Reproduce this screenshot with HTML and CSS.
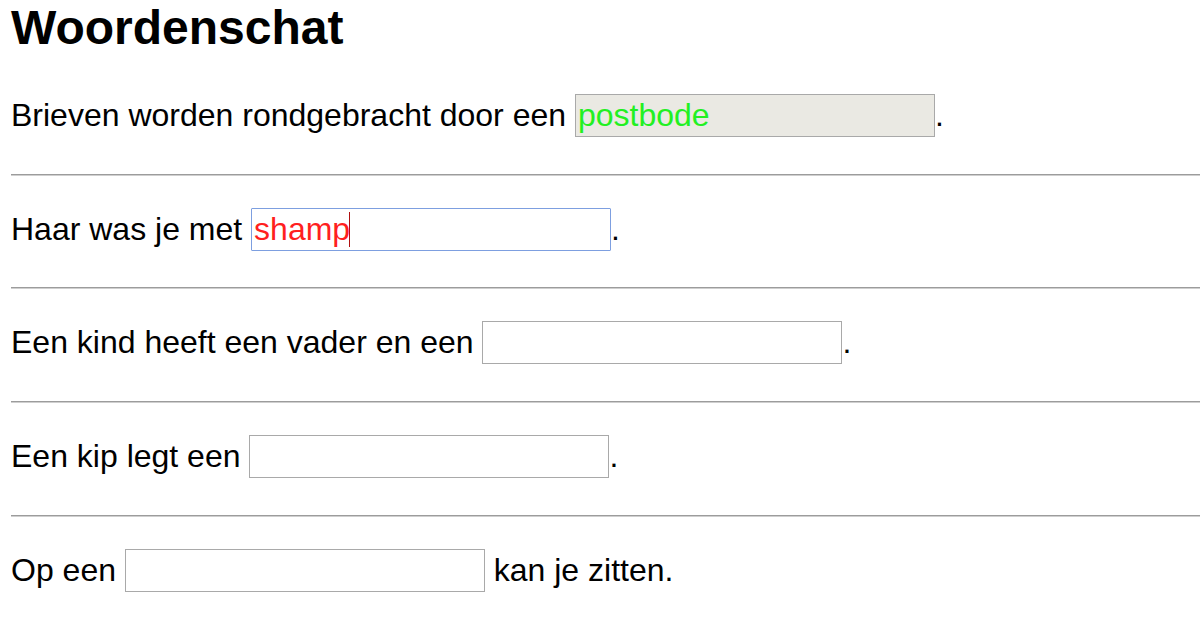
FILE: index.html
```html
<!DOCTYPE html>
<html lang="nl">
<head>
<meta charset="utf-8">
<title>Woordenschat</title>
<link rel="stylesheet" href="styles.css">
</head>
<body>
<h1 class="title">Woordenschat</h1>
<div class="quiz">
  <p class="q">Brieven worden rondgebracht door een <input class="blank correct" type="text" value="postbode" readonly>.</p>
  <hr class="sep">
  <p class="q">Haar was je met <span class="field"><input class="blank wrong active" type="text" value="shamp"><span class="caret"></span></span>.</p>
  <hr class="sep">
  <p class="q">Een kind heeft een vader en een <input class="blank" type="text">.</p>
  <hr class="sep">
  <p class="q">Een kip legt een <input class="blank" type="text">.</p>
  <hr class="sep">
  <p class="q">Op een <input class="blank" type="text"> kan je zitten.</p>
</div>
</body>
</html>
```

FILE: styles.css
```css
html, body {
  background: #ffffff;
}
body {
  margin: 0 0 0 11px;
  font-family: "Liberation Sans", Arial, sans-serif;
  color: #000000;
  font-size: 32px;
}
.title {
  margin: 0;
  font-size: 48px;
  font-weight: bold;
  line-height: 55px;
}
.quiz {
  padding-top: 39px;
}
.q {
  margin: 0;
  height: 43px;
  line-height: 43px;
  white-space: nowrap;
}
.sep {
  margin: 36.67px 0 32px 0;
  height: 0;
  border: 0;
  border-top: 1px solid #9c9c9c;
  border-bottom: 1px solid #cfcfcf;
}
.blank {
  box-sizing: border-box;
  width: 360px;
  height: 43px;
  margin: 0;
  padding: 1px 2px;
  border: 1px solid #a9a9a9;
  border-radius: 0;
  background: #ffffff;
  font-family: "Liberation Sans", Arial, sans-serif;
  font-size: 32px;
  color: #000000;
  vertical-align: baseline;
  outline: none;
}
.blank.correct {
  background: #eae9e3;
  color: #22f022;
}
.blank.wrong {
  color: #ff1f1f;
}
.blank.active {
  border-color: #7d9fe0;
  border-radius: 1px;
}
.field {
  position: relative;
  display: inline-block;
  line-height: 43px;
}
.caret {
  position: absolute;
  left: 98px;
  top: 4px;
  width: 1px;
  height: 35px;
  background: #b01010;
}
```
